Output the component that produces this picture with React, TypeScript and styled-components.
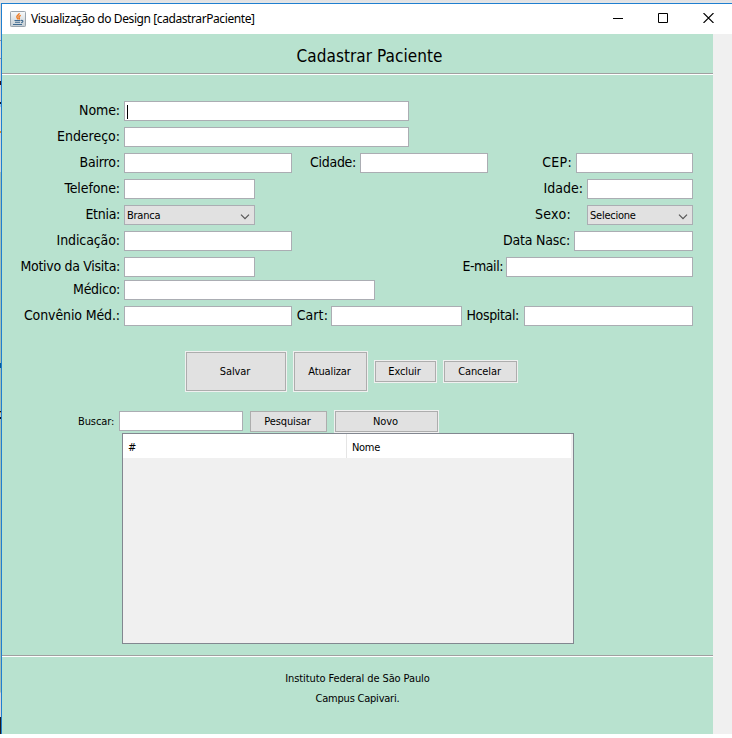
import React from "react";
import styled, { createGlobalStyle } from "styled-components";

const GlobalStyle = createGlobalStyle`
  * { box-sizing: border-box; }
  body { margin: 0; background: #fff; overflow: hidden; }
`;

const Desktop = styled.div`
  width: 732px;
  height: 734px;
  padding: 3px 0 0 1px;
  background:
    linear-gradient(#e1e1e3, #e6e6e6) 0 0 / 100% 3px no-repeat,
    linear-gradient(
      #d8d8d8 0 40px, #8d9299 40px 41px, #d8d8d8 41px 58px, #8d9299 58px 59px,
      #d0d0d4 59px 81px, #32101c 81px 85px, #cfcfd3 85px 102px, #10182c 102px 104px,
      #9cc4e4 104px 107px, #dcdcdc 107px 131px, #d98e2b 131px 133px, #cfd4d8 133px 172px,
      #a3bdb4 172px 363px, #075a96 363px 368px, #a3bdb4 368px 411px, #10101c 411px 412px,
      #b08a50 412px 413px, #b8c4b4 413px 417px, #10101c 417px 419px, #a3bdb4 419px 692px,
      #d8d4d8 693px 717px, #221c20 717px
    ) 0 0 / 1px 100% no-repeat;
  font-family: "DejaVu Sans Condensed", "DejaVu Sans", sans-serif;
  font-stretch: condensed;
  color: #000;
`;

const Window = styled.div`
  height: 731px;
  display: flex;
  flex-direction: column;
  border: solid #1f7fd0;
  border-width: 1px 0 0 1px;
  background: #f0f0f0;
`;

const TitleBar = styled.header`
  flex: none;
  height: 30px;
  display: flex;
  align-items: center;
  padding-left: 8px;
  background: #fff;
`;

const Caption = styled.span`
  flex: 1;
  margin-left: 5px;
  font: 12px/16px "Noto Sans", sans-serif;
  letter-spacing: -0.41px;
  white-space: nowrap;
`;

const WindowControls = styled.div`
  display: flex;
  gap: 35px;
  padding: 0 18px 2px 0;
  svg { display: block; }
`;

const Panel = styled.main`
  width: 711px;
  flex: 1;
  background: #b8e2cf;
`;

const Heading = styled.h1`
  height: 39px;
  margin: 0;
  padding-left: 24px;
  text-align: center;
  font-size: 17px;
  font-weight: 400;
  line-height: 45px;
  letter-spacing: 0.05px;
`;

const Separator = styled.hr<{ $before?: number }>`
  height: 2px;
  margin: ${(p) => p.$before ?? 0}px 0 0;
  border: solid;
  border-width: 1px 0;
  border-color: #a0a0a0 #fff #fff;
`;

const Form = styled.form`
  padding-top: 26px;
`;

const FormRow = styled.div<{ $after?: number }>`
  height: 20px;
  margin-bottom: ${(p) => p.$after ?? 6}px;
  display: flex;
`;

const Label = styled.label<{ $width: number; $before?: number; $after?: number; $spacing?: number }>`
  flex: none;
  width: ${(p) => p.$width + 1}px;
  margin-left: ${(p) => p.$before ?? 0}px;
  margin-right: ${(p) => (p.$after ?? 5) - 1}px;
  display: flex;
  justify-content: flex-end;
  white-space: nowrap;
  font-size: 14px;
  line-height: 18px;
  letter-spacing: ${(p) => p.$spacing ?? -0.3}px;
`;

const Field = styled.div<{ $width: number }>`
  flex: none;
  width: ${(p) => p.$width}px;
  height: 20px;
  padding: 3px 2px;
  border: 1px solid #abadb3;
  background: #fff;
`;

const Caret = styled.div`
  width: 1px;
  height: 14px;
  background: #000;
`;

const Combo = styled(Field)`
  display: flex;
  align-items: center;
  justify-content: space-between;
  padding: 0 4px 0 2px;
  background: #e1e1e1;
  font-size: 11px;
  letter-spacing: -0.25px;
  svg { margin-top: 3px; }
`;

const Actions = styled.div`
  display: flex;
  align-items: center;
  gap: 6px;
  height: 41px;
  margin: 25px 0 18px 183px;
`;

const Button = styled.button<{ $width: number; $height: number; $flat?: boolean }>`
  flex: none;
  display: block;
  width: ${(p) => p.$width}px;
  height: ${(p) => p.$height}px;
  padding: 0 2px 0 0;
  border: 1px solid #adadad;
  outline: ${(p) => (p.$flat ? "none" : "1px solid #f0f0f0")};
  margin: ${(p) => (p.$flat ? 0 : 1)}px;
  background: #e1e1e1;
  color: #000;
  font: inherit;
  font-size: 11px;
  letter-spacing: -0.12px;
`;

const SearchRow = styled.div`
  height: 23px;
  display: flex;
  align-items: flex-start;
  padding: 1px 0 0 76px;
`;

const SearchLabel = styled.label`
  width: 41px;
  font-size: 11px;
  line-height: 21px;
  letter-spacing: -0.1px;
`;

const PlainButtonSlot = styled.div`
  margin: 0 7px;
`;

const RaisedButtonSlot = styled.div`
  margin-top: -1px;
`;

const Table = styled.div`
  width: 452px;
  height: 211px;
  margin-left: 120px;
  border: 1px solid #828790;
  background: #f0f0f0;
`;

const HeaderRow = styled.div`
  height: 24px;
  margin-right: 2px;
  display: flex;
  background: #fff;
`;

const HeaderCell = styled.div<{ $width: number; $divided?: boolean }>`
  width: ${(p) => p.$width}px;
  padding-left: 5px;
  border-right: ${(p) => (p.$divided ? "1px solid #e5e5e5" : "none")};
  font-size: 11px;
  line-height: 27px;
  letter-spacing: -0.3px;
`;

const Footer = styled.footer`
  padding-top: 12px;
  text-align: center;
  font-size: 11px;
  line-height: 20px;
`;

const FooterLine = styled.div<{ $spacing: number }>`
  letter-spacing: ${(p) => p.$spacing}px;
`;

const JavaIcon = () => (
  <svg width="16" height="16" viewBox="0 0 16 16">
    <defs>
      <linearGradient id="tile" x1="0" y1="0" x2="0" y2="1">
        <stop offset="0" stopColor="#f8fafb" />
        <stop offset="1" stopColor="#c4cdd3" />
      </linearGradient>
    </defs>
    <rect x=".5" y=".5" width="15" height="15" rx=".8" fill="url(#tile)" stroke="#9aa4ad" />
    <path d="M9.2 2.2c.3 1.8-3.2 2.3-2.3 4.2L8.2 8.4M10.8 4.4C8.6 5.2 8.6 6 9.3 7c.3.5 0 1-.5 1.3" fill="none" stroke="#ee7b24" strokeWidth="1.4" />
    <path d="M4.5 9.5h6M5 11.2h5M3 13.5h9M11 9.5c2.4-.5 2.6 1.6.2 2.3" fill="none" stroke="#3f6a90" strokeWidth="1.1" />
  </svg>
);

const Chevron = () => (
  <svg width="10" height="6" viewBox="0 0 10 6">
    <path d="M1 .7 5 4.7 9 .7" fill="none" stroke="#555" strokeWidth="1.2" />
  </svg>
);

export default function App() {
  return (
    <>
      <GlobalStyle />
      <Desktop>
        <Window>
          <TitleBar>
            <JavaIcon />
            <Caption>Visualização do Design [cadastrarPaciente]</Caption>
            <WindowControls>
              <svg width="10" height="10"><path d="M0 5.5h10" stroke="#000" /></svg>
              <svg width="10" height="10"><path d="M.5.5h9v9h-9z" fill="none" stroke="#000" /></svg>
              <svg width="11" height="10"><path d="M.5 0l10 10M10.5 0l-10 10" stroke="#000" strokeWidth="1.1" /></svg>
            </WindowControls>
          </TitleBar>
          <Panel>
            <Heading>Cadastrar Paciente</Heading>
            <Separator />
            <Form>
              <FormRow>
                <Label $width={117} $spacing={-0.1}>Nome:</Label>
                <Field $width={285}><Caret /></Field>
              </FormRow>
              <FormRow>
                <Label $width={117} $spacing={-0.02}>Endereço:</Label>
                <Field $width={285} />
              </FormRow>
              <FormRow>
                <Label $width={117} $spacing={-0.15}>Bairro:</Label>
                <Field $width={168} />
                <Label $before={17} $width={46}>Cidade:</Label>
                <Field $width={128} />
                <Label $before={53} $width={30} $spacing={0.3}>CEP:</Label>
                <Field $width={117} />
              </FormRow>
              <FormRow>
                <Label $width={117} $spacing={-0.1}>Telefone:</Label>
                <Field $width={131} />
                <Label $before={287} $width={40} $spacing={0}>Idade:</Label>
                <Field $width={106} />
              </FormRow>
              <FormRow>
                <Label $width={117}>Etnia:</Label>
                <Combo $width={131}>Branca<Chevron /></Combo>
                <Label $before={277} $width={38} $after={17} $spacing={0.3}>Sexo:</Label>
                <Combo $width={106}>Selecione<Chevron /></Combo>
              </FormRow>
              <FormRow>
                <Label $width={117} $spacing={-0.1}>Indicação:</Label>
                <Field $width={168} />
                <Label $before={208} $width={69} $spacing={-0.2}>Data Nasc:</Label>
                <Field $width={119} />
              </FormRow>
              <FormRow $after={3}>
                <Label $width={117}>Motivo da Visita:</Label>
                <Field $width={131} />
                <Label $before={205} $width={42} $after={4} $spacing={-0.45}>E-mail:</Label>
                <Field $width={187} />
              </FormRow>
              <FormRow>
                <Label $width={117}>Médico:</Label>
                <Field $width={251} />
              </FormRow>
              <FormRow $after={0}>
                <Label $width={117} $spacing={-0.12}>Convênio Méd.:</Label>
                <Field $width={168} />
                <Label $before={3} $width={32} $after={4} $spacing={0.1}>Cart:</Label>
                <Field $width={131} />
                <Label $before={3} $width={53} $after={6} $spacing={-0.35}>Hospital:</Label>
                <Field $width={169} />
              </FormRow>
            </Form>
            <Actions>
              <Button $width={100} $height={39}>Salvar</Button>
              <Button $width={73} $height={39}>Atualizar</Button>
              <Button $width={61} $height={21}>Excluir</Button>
              <Button $width={73} $height={21}>Cancelar</Button>
            </Actions>
            <SearchRow>
              <SearchLabel>Buscar:</SearchLabel>
              <Field $width={124} />
              <PlainButtonSlot><Button $flat $width={77} $height={21}>Pesquisar</Button></PlainButtonSlot>
              <RaisedButtonSlot><Button $width={103} $height={21}>Novo</Button></RaisedButtonSlot>
            </SearchRow>
            <Table>
              <HeaderRow>
                <HeaderCell $divided $width={224}>#</HeaderCell>
                <HeaderCell $width={224}>Nome</HeaderCell>
              </HeaderRow>
            </Table>
            <Separator $before={11} />
            <Footer>
              <FooterLine $spacing={-0.1}>Instituto Federal de São Paulo</FooterLine>
              <FooterLine $spacing={-0.22}>Campus Capivari.</FooterLine>
            </Footer>
          </Panel>
        </Window>
      </Desktop>
    </>
  );
}
